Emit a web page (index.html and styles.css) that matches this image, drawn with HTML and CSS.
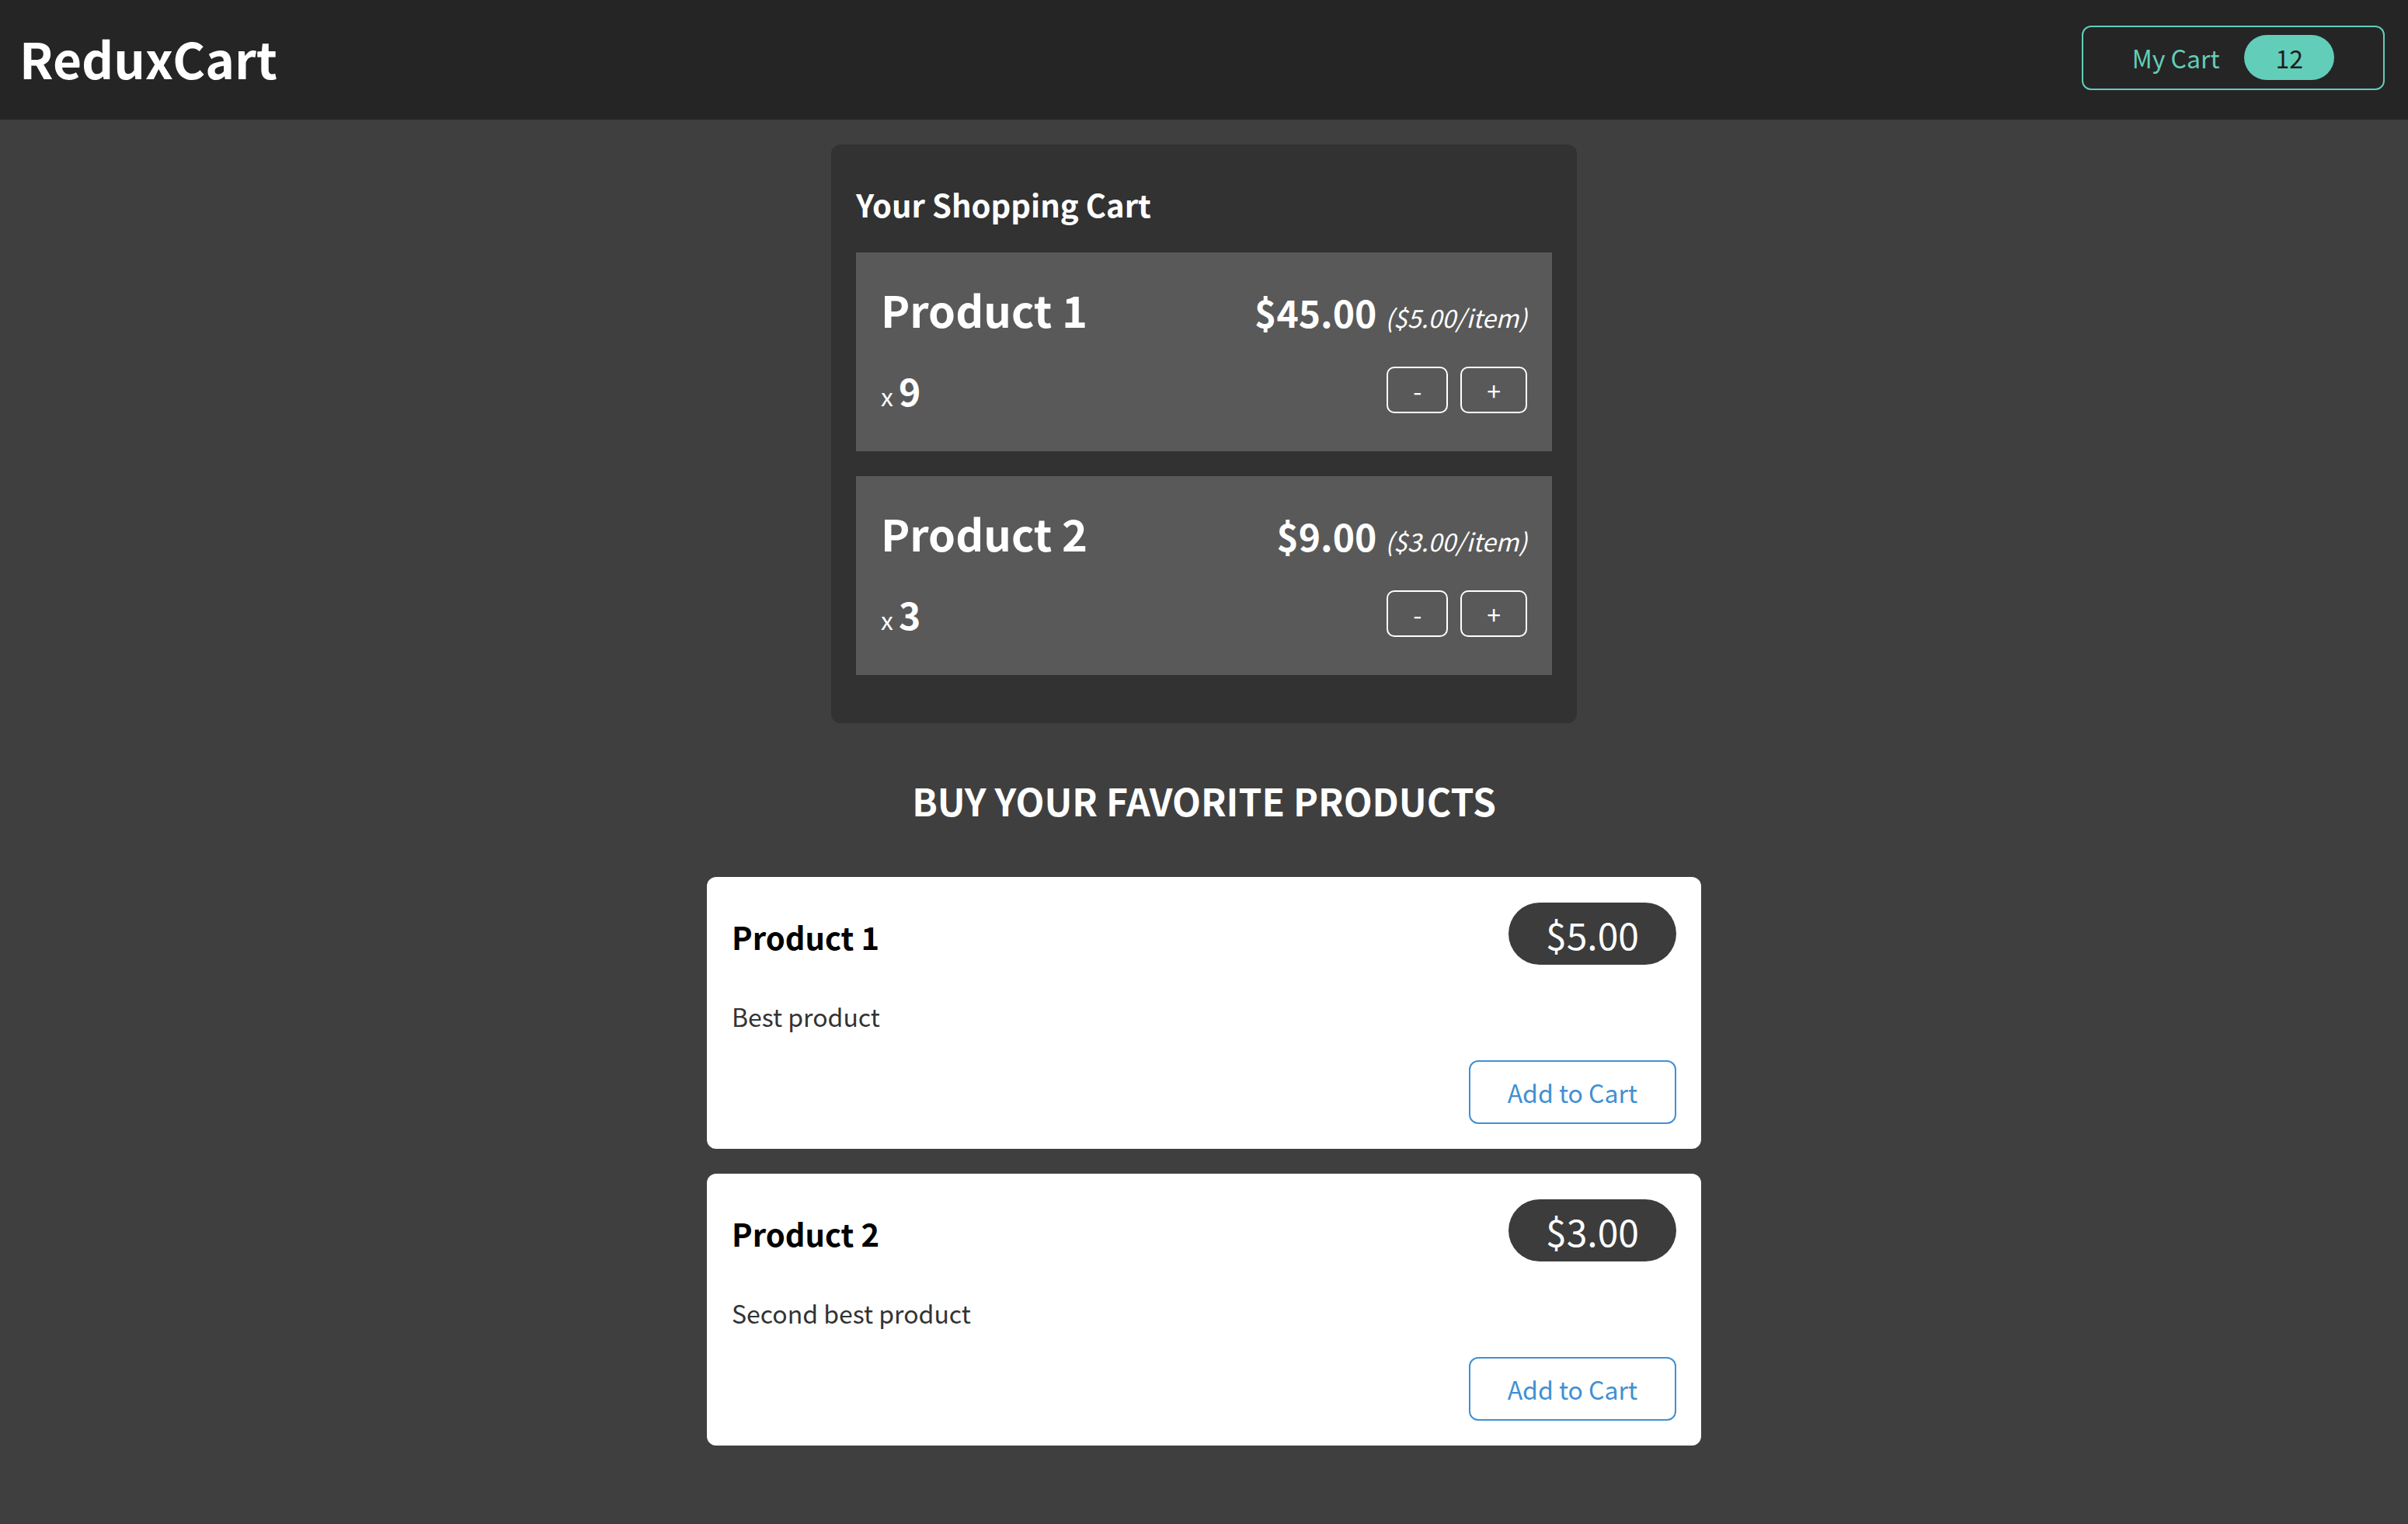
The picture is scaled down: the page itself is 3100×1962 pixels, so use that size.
FILE: index.html
```html
<!DOCTYPE html>
<html lang="en">
<head>
<meta charset="utf-8">
<title>ReduxCart</title>
<link rel="stylesheet" href="styles.css">
</head>
<body>
<header class="main-header">
  <h1 class="logo">ReduxCart</h1>
  <nav>
    <button class="cart-button" type="button">
      <span>My Cart</span>
      <span class="badge">12</span>
    </button>
  </nav>
</header>
<main>
  <section class="cart">
    <h2 class="cart-title">Your Shopping Cart</h2>
    <ul class="cart-list">
      <li class="item">
        <header class="item-header">
          <h3 class="item-name">Product 1</h3>
          <div class="item-price">$45.00 <span class="unit-price">($5.00/item)</span></div>
        </header>
        <div class="item-details">
          <div class="quantity">x <span class="qty-num">9</span></div>
          <div class="actions">
            <button class="qty-btn" type="button">-</button>
            <button class="qty-btn" type="button">+</button>
          </div>
        </div>
      </li>
      <li class="item">
        <header class="item-header">
          <h3 class="item-name">Product 2</h3>
          <div class="item-price">$9.00 <span class="unit-price">($3.00/item)</span></div>
        </header>
        <div class="item-details">
          <div class="quantity">x <span class="qty-num">3</span></div>
          <div class="actions">
            <button class="qty-btn" type="button">-</button>
            <button class="qty-btn" type="button">+</button>
          </div>
        </div>
      </li>
    </ul>
  </section>
  <section class="products">
    <h2 class="products-title">Buy your favorite products</h2>
    <ul class="product-list">
      <li class="product">
        <header class="product-header">
          <h3 class="product-name">Product 1</h3>
          <div class="price-badge">$5.00</div>
        </header>
        <p class="product-desc">Best product</p>
        <div class="product-actions">
          <button class="add-btn" type="button">Add to Cart</button>
        </div>
      </li>
      <li class="product">
        <header class="product-header">
          <h3 class="product-name">Product 2</h3>
          <div class="price-badge">$3.00</div>
        </header>
        <p class="product-desc">Second best product</p>
        <div class="product-actions">
          <button class="add-btn" type="button">Add to Cart</button>
        </div>
      </li>
    </ul>
  </section>
</main>
</body>
</html>
```

FILE: styles.css
```css
* {
  box-sizing: border-box;
}

html {
  font-family: "Noto Sans CJK JP", "Noto Sans", sans-serif;
}

body {
  margin: 0;
  background: #3f3f3f;
}

/* Header */
.main-header {
  height: 154px;
  padding: 0 30px 6px 25px;
  display: flex;
  justify-content: space-between;
  align-items: center;
  background: #252525;
}

.logo {
  margin: 0;
  color: #ffffff;
  font-size: 64px;
  font-weight: 700;
}

.cart-button {
  display: inline-flex;
  align-items: center;
  height: 83px;
  padding: 0 63px;
  border: 2px solid #62cdb9;
  border-radius: 12px;
  background: transparent;
  color: #62cdb9;
  font-family: inherit;
  font-size: 32px;
}

.badge {
  margin-left: 32px;
  padding: 0 40px;
  height: 58px;
  line-height: 58px;
  border-radius: 29px;
  background: #62cdb9;
  color: #1e1e1e;
}

/* Cart */
.cart {
  width: 960px;
  margin: 32px auto 0;
  padding: 32px 32px 62px;
  background: #323232;
  border-radius: 12px;
  color: #ffffff;
}

.cart-title {
  margin: 16px 0 33px;
  font-size: 40px;
  font-weight: 700;
}

.cart-list {
  list-style: none;
  margin: 0;
  padding: 0;
  display: flex;
  flex-direction: column;
  gap: 32px;
}

.item {
  background: #595959;
  padding: 32px 32px 44px;
}

.item-header {
  display: flex;
  justify-content: space-between;
  align-items: baseline;
  margin-bottom: 29px;
}

.item-name {
  margin: 0;
  font-size: 56px;
  font-weight: 700;
}

.item-price {
  font-size: 48px;
  font-weight: 700;
}

.unit-price {
  font-size: 32px;
  font-weight: 400;
  font-style: italic;
}

.item-details {
  display: flex;
  justify-content: space-between;
  align-items: center;
}

.quantity {
  font-size: 32px;
}

.qty-num {
  font-size: 48px;
  font-weight: 700;
}

.actions {
  display: flex;
  gap: 16px;
}

.qty-btn {
  font-family: inherit;
  font-size: 32px;
  color: #ffffff;
  background: transparent;
  border: 2px solid #ffffff;
  border-radius: 10px;
  padding: 4.8px 32px;
}

/* Products */
.products {
  width: 1280px;
  margin: 64px auto 0;
}

.products-title {
  margin: 0 0 64px;
  text-align: center;
  color: #ffffff;
  font-size: 48px;
  font-weight: 700;
  text-transform: uppercase;
}

.product-list {
  list-style: none;
  margin: 0;
  padding: 0;
  display: flex;
  flex-direction: column;
  gap: 32px;
}

.product {
  background: #ffffff;
  border-radius: 12px;
  padding: 32px;
}

.product-header {
  display: flex;
  justify-content: space-between;
  align-items: baseline;
}

.product-name {
  margin: 16px 0;
  font-size: 40px;
  font-weight: 700;
  color: #000000;
}

.price-badge {
  padding: 4.8px 48px;
  border-radius: 40px;
  background: #3c3c3c;
  color: #ffffff;
  font-size: 48px;
}

.product-desc {
  margin: 34px 0 0;
  font-size: 32px;
  color: #333333;
}

.product-actions {
  display: flex;
  justify-content: flex-end;
  margin-top: 34px;
}

.add-btn {
  font-family: inherit;
  font-size: 32px;
  padding: 16px 48px;
  border: 2px solid #4190d2;
  border-radius: 12px;
  background: transparent;
  color: #4190d2;
}
```
